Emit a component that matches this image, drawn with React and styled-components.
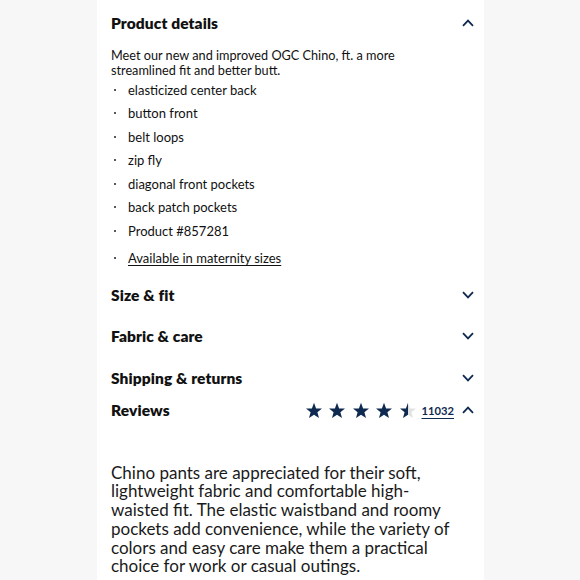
import React from "react";
import styled, { createGlobalStyle } from "styled-components";

const Global = createGlobalStyle`
  html, body { margin: 0; padding: 0; background: #f7f7f7; }
  body { font-family: Lato, "Noto Sans", sans-serif; color: #111; }
`;

const Page = styled.div`
  width: 580px;
  height: 580px;
  overflow: hidden;
  display: flex;
  justify-content: flex-start;
`;

const Panel = styled.div`
  margin-left: 97px;
  width: 387px;
  background: #fff;
  padding: 0 10px 0 14px;
  box-sizing: border-box;
  display: flex;
  flex-direction: column;
`;

const Row = styled.div`
  height: ${(p) => p.$h}px;
  display: flex;
  align-items: center;
  justify-content: space-between;
`;

const Title = styled.div`
  font-size: 15.5px;
  font-weight: 800;
  color: #111;
  letter-spacing: 0.1px;
`;

const Desc = styled.p`
  margin: 2px 0 0;
  font-size: 12.7px;
  line-height: 14.5px;
  width: 300px;
`;

const List = styled.ul`
  list-style: none;
  margin: 1px 0 0;
  padding: 0;
`;

const Item = styled.li`
  height: 23.5px;
  display: flex;
  align-items: center;
  font-size: 13px;
  margin-top: ${(p) => (p.$gap ? "4px" : "0")};
  &::before {
    content: "";
    width: 2px;
    height: 2px;
    background: #222;
    border-radius: 1px;
    margin: 0 12px 0 3px;
  }
`;

const Link = styled.a`
  color: #111;
  text-decoration: underline;
  text-underline-offset: 2px;
`;

const Right = styled.div`
  display: flex;
  align-items: center;
`;

const Stars = styled.div`
  display: flex;
  gap: 5.4px;
  margin-right: 5px;
`;

const Count = styled.a`
  font-size: 11.2px;
  font-weight: 700;
  color: #0f2a50;
  text-decoration: underline;
  text-underline-offset: 3px;
  margin-right: 8px;
`;

const Para = styled.p`
  margin: 42px 0 0;
  width: 345px;
  font-size: 17px;
  line-height: 18.8px;
  color: #1a1a1a;
`;

const NAVY = "#0f2a50";

const Chevron = ({ up }) => (
  <svg width="12" height="8" viewBox="0 0 12 8">
    <path
      d={up ? "M1 6.8 L6 1.6 L11 6.8" : "M1 1.2 L6 6.4 L11 1.2"}
      fill="none"
      stroke={NAVY}
      strokeWidth="1.8"
    />
  </svg>
);

const starPath =
  "M9 0.8 L11.1 6.4 L17 6.6 L12.4 10.3 L14 16.1 L9 12.8 L4 16.1 L5.6 10.3 L1 6.6 L6.9 6.4 Z";

const Star = ({ half, id }) => (
  <svg width="18" height="17" viewBox="0 0 18 17">
    {half ? (
      <>
        <defs>
          <linearGradient id={id}>
            <stop offset="50%" stopColor={NAVY} />
            <stop offset="50%" stopColor="#e2e2e2" />
          </linearGradient>
        </defs>
        <path d={starPath} fill={`url(#${id})`} />
      </>
    ) : (
      <path d={starPath} fill={NAVY} />
    )}
  </svg>
);

const items = [
  "elasticized center back",
  "button front",
  "belt loops",
  "zip fly",
  "diagonal front pockets",
  "back patch pockets",
  "Product #857281",
];

export default function App() {
  return (
    <Page>
      <Global />
      <Panel>
        <Row $h={46}>
          <Title>Product details</Title>
          <Chevron up />
        </Row>
        <Desc>
          Meet our new and improved OGC Chino, ft. a more streamlined fit and better butt.
        </Desc>
        <List>
          {items.map((t) => (
            <Item key={t}>{t}</Item>
          ))}
          <Item $gap>
            <Link>Available in maternity sizes</Link>
          </Item>
        </List>
        <Row $h={41.5} style={{ marginTop: 4 }}>
          <Title>Size &amp; fit</Title>
          <Chevron />
        </Row>
        <Row $h={41.5}>
          <Title>Fabric &amp; care</Title>
          <Chevron />
        </Row>
        <Row $h={41.5}>
          <Title>Shipping &amp; returns</Title>
          <Chevron />
        </Row>
        <Row $h={23}>
          <Title>Reviews</Title>
          <Right>
            <Stars>
              <Star />
              <Star />
              <Star />
              <Star />
              <Star half id="halfstar" />
            </Stars>
            <Count>11032</Count>
            <Chevron up />
          </Right>
        </Row>
        <Para>
          Chino pants are appreciated for their soft, lightweight fabric and comfortable high-waisted fit. The elastic waistband and roomy pockets add convenience, while the variety of colors and easy care make them a practical choice for work or casual outings.
        </Para>
      </Panel>
    </Page>
  );
}
